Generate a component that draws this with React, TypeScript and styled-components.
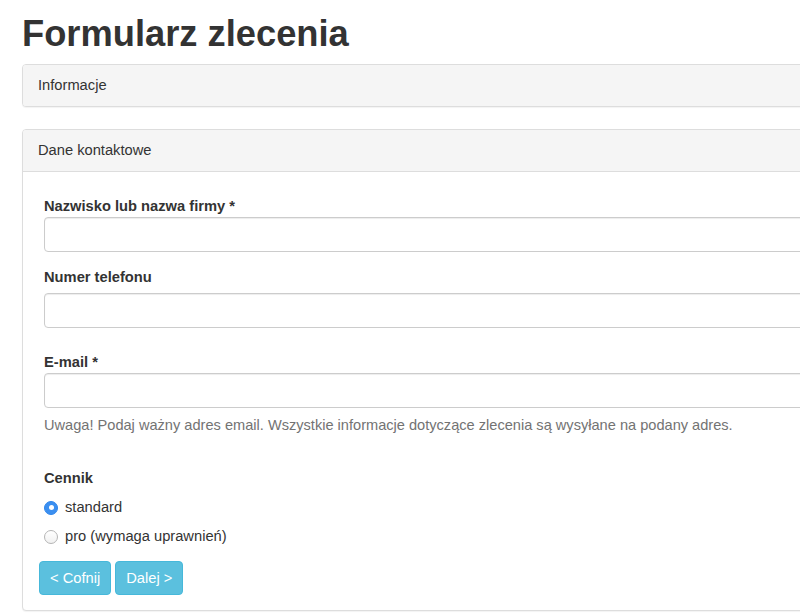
import React, { FC } from 'react';
import styled, { createGlobalStyle } from 'styled-components';

const GlobalStyle = createGlobalStyle`
  html, body {
    margin: 0;
    padding: 0;
    background: #fff;
    overflow: hidden;
  }
  body {
    font-family: "Liberation Sans", Arial, Helvetica, sans-serif;
    font-size: 14.7px;
    line-height: 21px;
    color: #333;
  }
`;

const Page = styled.div`
  width: 1040px;
  padding: 12px 0 0 22px;
`;

const Title = styled.h1`
  margin: 0 0 8px;
  font-size: 36.3px;
  line-height: 44px;
  font-weight: 700;
  color: #333;
`;

const Panel = styled.section`
  border: 1px solid #ddd;
  border-radius: 4px;
  background: #fff;
  box-shadow: 0 1px 1px rgba(0, 0, 0, 0.05);
  margin-bottom: 22px;
`;

const PanelHeading = styled.div<{ $closed?: boolean }>`
  height: 41px;
  line-height: 41px;
  padding: 0 15px;
  background: #f5f5f5;
  color: #333;
  border-radius: ${p => (p.$closed ? '3px' : '3px 3px 0 0')};
  border-bottom: ${p => (p.$closed ? 'none' : '1px solid #ddd')};
`;

const PanelBody = styled.div`
  padding: 24px 0 15px 16px;
`;

const FormGroup = styled.div<{ $top?: number }>`
  margin-top: ${p => p.$top ?? 0}px;
  padding-left: 5px;
`;

const Label = styled.label<{ $gap?: number }>`
  display: block;
  font-weight: 700;
  line-height: 21px;
  margin-bottom: ${p => p.$gap ?? 0}px;
`;

const TextInput = styled.input`
  display: block;
  box-sizing: border-box;
  width: 100%;
  height: 35px;
  padding: 6px 12px;
  font: inherit;
  color: #555;
  background: #fff;
  border: 1px solid #ccc;
  border-radius: 4px;
  box-shadow: inset 0 1px 1px rgba(0, 0, 0, 0.075);
  outline: none;
`;

const HelpText = styled.p`
  margin: 7px 0 0;
  color: #737373;
  line-height: 21px;
  font-size: 14.6px;
`;

const RadioList = styled.div`
  display: flex;
  flex-direction: column;
  gap: 8px;
  margin-top: 8px;
`;

const RadioLabel = styled.label`
  display: flex;
  align-items: center;
  line-height: 21px;
  gap: 7px;
  cursor: pointer;
`;

const RadioMark = styled.input`
  appearance: none;
  margin: 0;
  width: 14px;
  height: 14px;
  border-radius: 50%;
  border: 1px solid #b5b5b5;
  background: linear-gradient(#fff, #f1f1f1);
  box-sizing: border-box;
  position: relative;

  &:checked {
    border-color: #2f86ec;
    background: #3b8ff0;
  }

  &:checked::after {
    content: '';
    position: absolute;
    left: 50%;
    top: 50%;
    width: 5px;
    height: 5px;
    margin: -2.5px 0 0 -2.5px;
    border-radius: 50%;
    background: #fff;
  }
`;

const Buttons = styled.div`
  display: flex;
  gap: 4px;
  margin-top: 14px;
`;

const Button = styled.button`
  height: 34px;
  padding: 0 10px;
  font: inherit;
  color: #fff;
  background: #5bc0de;
  border: 1px solid #46b8da;
  border-radius: 4px;
  cursor: pointer;
`;

const App: FC = () => {
  return (
    <Page>
      <GlobalStyle />
      <Title>Formularz zlecenia</Title>

      <Panel>
        <PanelHeading $closed>Informacje</PanelHeading>
      </Panel>

      <Panel>
        <PanelHeading>Dane kontaktowe</PanelHeading>
        <PanelBody>
          <FormGroup>
            <Label htmlFor="name">Nazwisko lub nazwa firmy *</Label>
            <TextInput id="name" type="text" />
          </FormGroup>

          <FormGroup $top={15}>
            <Label htmlFor="phone" $gap={5}>Numer telefonu</Label>
            <TextInput id="phone" type="text" />
          </FormGroup>

          <FormGroup $top={24}>
            <Label htmlFor="email">E-mail *</Label>
            <TextInput id="email" type="email" />
            <HelpText>
              Uwaga! Podaj ważny adres email. Wszystkie informacje dotyczące zlecenia są wysyłane na podany adres.
            </HelpText>
          </FormGroup>

          <FormGroup $top={32}>
            <Label as="div">Cennik</Label>
            <RadioList>
              <RadioLabel>
                <RadioMark type="radio" name="cennik" defaultChecked />
                standard
              </RadioLabel>
              <RadioLabel>
                <RadioMark type="radio" name="cennik" />
                pro (wymaga uprawnień)
              </RadioLabel>
            </RadioList>
          </FormGroup>

          <Buttons>
            <Button type="button">&lt; Cofnij</Button>
            <Button type="button">Dalej &gt;</Button>
          </Buttons>
        </PanelBody>
      </Panel>
    </Page>
  );
};

export default App;
